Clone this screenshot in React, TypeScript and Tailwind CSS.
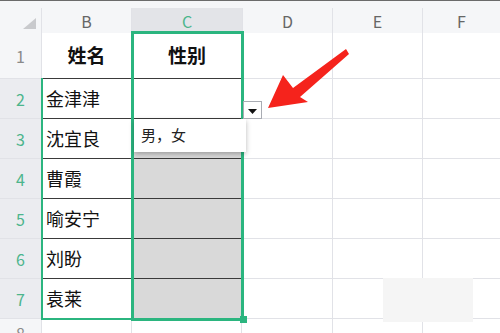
import React from 'react';

const GRID = 'border-[#e1e2e7]';
const DARK = 'border-[#3a3a3a]';

const rows = [
  { n: 1, b: '姓名', head: true, h: 'h-[46px]' },
  { n: 2, b: '金津津', h: 'h-[40px]' },
  { n: 3, b: '沈宜良', h: 'h-[40px]' },
  { n: 4, b: '曹霞', h: 'h-[40px]' },
  { n: 5, b: '喻安宁', h: 'h-[40px]' },
  { n: 6, b: '刘盼', h: 'h-[40px]' },
  { n: 7, b: '袁莱', h: 'h-[40px]' },
];

const Arrow = () => (
  <svg className="absolute left-0 top-0 pointer-events-none" width="500" height="333" viewBox="0 0 500 333">
    <polygon
      points="268,108 283,75 293,88 346,49 349,54 300,97 308,102"
      fill="#f5231c"
    />
  </svg>
);

export default function App() {
  return (
    <div
      className="relative w-[500px] h-[333px] overflow-hidden bg-white"
      style={{ fontFamily: '"Noto Sans CJK SC", "Noto Sans", sans-serif' }}
    >
      {/* top strip */}
      <div className="h-[8px] bg-[#f5f6f8] border-t border-[#6b6b6b]" />

      {/* column headers */}
      <div className="flex h-[25px] bg-[#f5f6f8] text-[16px] text-[#666]">
        <div className={`w-[42px] shrink-0 border-r ${GRID} relative`}>
          <svg className="absolute left-[23px] top-[10px]" width="13" height="11" viewBox="0 0 13 11">
            <polygon points="0,11 13,0 13,11" fill="#c9cacd" />
          </svg>
        </div>
        <div className={`w-[90px] shrink-0 border-r ${GRID} flex items-center justify-center`}>B</div>
        <div className="w-[110px] shrink-0 bg-[#e3e4e8] flex items-center justify-center text-[#4cb58c]">C</div>
        <div className={`w-[91px] shrink-0 border-r border-l ${GRID} flex items-center justify-center`}>D</div>
        <div className={`w-[90px] shrink-0 border-r ${GRID} flex items-center justify-center`}>E</div>
        <div className="flex-1 flex items-center justify-center">F</div>
      </div>

      {/* body rows */}
      {rows.map((r) => (
        <div key={r.n} className={`flex ${r.h}`}>
          <div
            className={`w-[42px] shrink-0 border-r border-b ${GRID} flex items-center justify-center text-[16px] ${
              r.head ? 'bg-[#f5f6f8] text-[#8a8a8a]' : 'bg-[#ebecf0] text-[#4cb58c]'
            }`}
          >
            {r.n}
          </div>
          <div
            className={`w-[90px] shrink-0 border-r border-b ${DARK} flex items-center ${
              r.head ? 'justify-center font-bold text-[19px]' : 'pl-[4px] text-[18px]'
            } text-[#111]`}
          >
            {r.b}
          </div>
          <div
            className={`w-[110px] shrink-0 border-b ${DARK} flex items-center justify-center ${
              r.head ? 'font-bold text-[19px] text-[#111]' : r.n === 2 ? 'bg-white' : 'bg-[#d9d9d9]'
            }`}
          >
            {r.head ? '性别' : ''}
          </div>
          <div className={`w-[91px] shrink-0 border-r border-b ${GRID}`} />
          <div className={`w-[90px] shrink-0 border-r border-b ${GRID}`} />
          <div className={`flex-1 border-b ${GRID}`} />
        </div>
      ))}

      {/* row 8 */}
      <div className="flex h-[40px]">
        <div className={`w-[42px] shrink-0 border-r ${GRID} bg-[#f5f6f8] text-[16px] text-[#8a8a8a] flex justify-center pt-[2px]`}>8</div>
        <div className={`w-[90px] shrink-0 border-r ${GRID}`} />
        <div className={`w-[110px] shrink-0 border-r ${GRID}`} />
        <div className={`w-[91px] shrink-0 border-r ${GRID}`} />
        <div className={`w-[90px] shrink-0 border-r ${GRID}`} />
        <div className="flex-1" />
      </div>

      {/* referenced range B2:B7 */}
      <div className="absolute left-[41px] top-[78px] w-[93px] h-[242px] border-l-2 border-b-2 border-[#2bb57f] pointer-events-none" />
      {/* selected range C1:C7 */}
      <div className="absolute left-[131px] top-[31px] w-[113px] h-[290px] border-[3px] border-[#2bb57f] pointer-events-none" />
      <div className="absolute left-[240px] top-[316px] w-[7px] h-[7px] bg-[#2bb57f]" />

      {/* dropdown list */}
      <div className="absolute left-[134px] top-[119px] w-[112px] h-[33px] bg-white shadow-[0_2px_5px_rgba(0,0,0,0.28)] flex items-center pl-[7px] text-[15px] text-[#222]">
        男，女
      </div>

      {/* dropdown button */}
      <div className="absolute left-[243px] top-[101px] w-[19px] h-[18px] bg-white border border-[#a9acb3] flex items-end justify-center pb-[4px]">
        <svg width="9" height="5" viewBox="0 0 9 5">
          <polygon points="0,0 9,0 4.5,5" fill="#111" />
        </svg>
      </div>

      <Arrow />

      {/* faint patch bottom right */}
      <div className="absolute left-[383px] top-[278px] w-[90px] h-[44px] bg-[#f5f5f5]" />
    </div>
  );
}
